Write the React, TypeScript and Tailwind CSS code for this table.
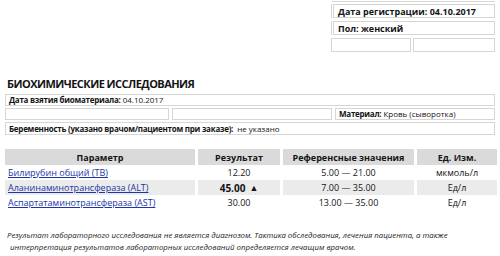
import React from 'react';

interface ResultRow {
  name: string;
  value: string;
  high?: boolean;
  range: string;
  unit: string;
}

const rows: ResultRow[] = [
  { name: 'Билирубин общий (TB)', value: '12.20', range: '5.00 — 21.00', unit: 'мкмоль/л' },
  { name: 'Аланинаминотрансфераза (ALT)', value: '45.00', high: true, range: '7.00 — 35.00', unit: 'Ед/л' },
  { name: 'Аспартатаминотрансфераза (AST)', value: '30.00', range: '13.00 — 35.00', unit: 'Ед/л' },
];

const cell = 'border border-[#d6d6d6] box-border';

const App: React.FC = () => {
  return (
    <div
      className="w-[500px] h-[256px] overflow-hidden bg-white text-[#141414] relative"
      style={{ fontFamily: '"Open Sans", "Noto Sans", sans-serif' }}
    >
      {/* Patient header block */}
      <div className="ml-[332px] w-[163px] h-[2px] border-b border-[#d6d6d6]" />
      <div className="mt-[2px] flex pl-[331px]">
        <div className="w-[2px] h-[14px] border-l border-[#d6d6d6]" />
        <div className={`${cell} w-[162px] h-[14px] flex items-center pl-[4px] text-[9px] font-bold leading-none`}>
          Дата регистрации: 04.10.2017
        </div>
      </div>
      <div className="mt-[3px] flex pl-[331px]">
        <div className="w-[2px] h-[14px] border-l border-[#d6d6d6]" />
        <div className={`${cell} w-[162px] h-[14px] flex items-center pl-[4px] text-[9px] font-bold leading-none`}>
          Пол: женский
        </div>
      </div>
      <div className="mt-[3px] flex pl-[331px] gap-[2px]">
        <div className={`${cell} w-[80px] h-[14px]`} />
        <div className={`${cell} w-[82px] h-[14px]`} />
      </div>

      {/* Section title */}
      <div className="mt-[25px] pl-[7px] text-[11px] font-bold leading-[14px] tracking-[-0.55px]">
        БИОХИМИЧЕСКИЕ ИССЛЕДОВАНИЯ
      </div>

      <div className="px-[5px] text-[8px] leading-none">
        <div className={`${cell} mt-[3px] h-[12px] flex items-center pl-[3px]`}>
          <span className="font-bold tracking-[-0.25px]">Дата взятия биоматериала:</span>
          <span className="ml-[2px]">04.10.2017</span>
        </div>
        <div className="mt-[2px] flex gap-[3px]">
          <div className={`${cell} w-[164px] h-[12px]`} />
          <div className={`${cell} w-[160px] h-[12px]`} />
          <div className={`${cell} flex-1 h-[12px] flex items-center pl-[3px]`}>
            <span className="font-bold tracking-[-0.25px]">Материал:</span>
            <span className="ml-[2px]">Кровь (сыворотка)</span>
          </div>
        </div>
        <div className={`${cell} mt-[2px] h-[13px] flex items-center pl-[3px]`}>
          <span className="font-bold tracking-[-0.25px]">Беременность (указано врачом/пациентом при заказе):</span>
          <span className="ml-[4px]">не указано</span>
        </div>
      </div>

      {/* Results table */}
      <div className="mt-[14px] px-[5px] text-[9px] leading-none">
        <div className="grid grid-cols-[190px_82px_131px_80px] gap-x-[3px]">
          {['Параметр', 'Результат', 'Референсные значения', 'Ед. Изм.'].map((h) => (
            <div key={h} className="h-[16px] bg-[#dadada] flex items-center justify-center font-bold">
              {h}
            </div>
          ))}
          {rows.map((r, i) => {
            const bg = i % 2 === 1 ? 'bg-[#ebebeb]' : '';
            return (
              <React.Fragment key={r.name}>
                <div className={`h-[15px] ${bg} flex items-center pl-[3px]`}>
                  <span className="text-[#1d35a6] underline underline-offset-[1px]">{r.name}</span>
                </div>
                <div className={`h-[15px] ${bg} flex items-center justify-center ${r.high ? 'font-bold text-[10px]' : ''}`}>
                  {r.value}
                  {r.high && <span className="ml-[4px] text-[9px]">▲</span>}
                </div>
                <div className={`h-[15px] ${bg} flex items-center justify-center`}>{r.range}</div>
                <div className={`h-[15px] ${bg} flex items-center justify-center`}>{r.unit}</div>
              </React.Fragment>
            );
          })}
        </div>
      </div>

      {/* Disclaimer */}
      <div className="mt-[19px] pl-[7px] text-[7.8px] italic leading-[12px] text-[#1a1a1a]">
        <div>
          Результат лабораторного исследования не является диагнозом. Тактика обследования, лечения пациента, а также
        </div>
        <div className="pl-[3px]">
          интерпретация результатов лабораторных исследований определяется лечащим врачом.
        </div>
      </div>
    </div>
  );
};

export default App;
